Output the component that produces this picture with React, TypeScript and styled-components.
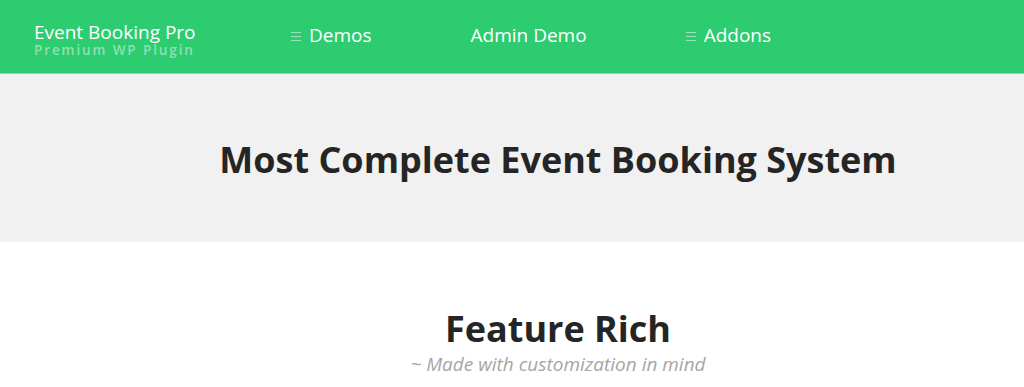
import React from "react";
import styled, { createGlobalStyle } from "styled-components";

const GlobalStyle = createGlobalStyle`
  html, body {
    margin: 0;
    padding: 0;
    background: #ffffff;
    font-family: "Open Sans", "Liberation Sans", sans-serif;
  }
`;

const navItems = [
  { label: "Demos", menu: true },
  { label: "Admin Demo", menu: false },
  { label: "Addons", menu: true },
];

export default function App() {
  return (
    <>
      <GlobalStyle />
      <Header>
        <Brand>
          <div className="name">Event Booking Pro</div>
          <div className="tagline">Premium WP Plugin</div>
        </Brand>
        <Nav>
          {navItems.map((item) => (
            <NavItem key={item.label}>
              {item.menu && <MenuIcon />}
              {item.label}
            </NavItem>
          ))}
        </Nav>
      </Header>
      <Hero>
        <HeroTitle>Most Complete Event Booking System</HeroTitle>
      </Hero>
      <Section>
        <SectionTitle>Feature Rich</SectionTitle>
        <SectionSub>~ Made with customization in mind</SectionSub>
      </Section>
    </>
  );
}

const Header = styled.header`
  height: 73px;
  background: #2ecc71;
  border-bottom: 1px solid #7fe0a8;
  display: flex;
  align-items: center;
  padding-left: 34px;
  box-sizing: content-box;
`;

const Brand = styled.div`
  width: 257px;
  display: flex;
  flex-direction: column;
  margin-top: 6px;

  > .name {
    color: #ffffff;
    font-size: 19px;
    line-height: 20px;
  }

  > .tagline {
    color: rgba(255, 255, 255, 0.45);
    font-size: 13.5px;
    font-weight: 600;
    letter-spacing: 1.9px;
    line-height: 16px;
  }
`;

const Nav = styled.nav`
  display: flex;
  gap: 99px;
  margin-top: -4px;
`;

const NavItem = styled.div`
  display: flex;
  align-items: center;
  color: #ffffff;
  font-size: 19px;
  line-height: 24px;
`;

const MenuIcon = styled.span`
  display: inline-block;
  width: 10px;
  height: 7px;
  margin-right: 8px;
  margin-top: 4px;
  border-top: 1px solid rgba(255, 255, 255, 0.5);
  border-bottom: 1px solid rgba(255, 255, 255, 0.5);
  position: relative;

  &::after {
    content: "";
    position: absolute;
    left: 0;
    right: 0;
    top: 3px;
    border-top: 1px solid rgba(255, 255, 255, 0.5);
  }
`;

const Hero = styled.section`
  height: 168px;
  background: #f1f1f1;
  display: flex;
  align-items: center;
  justify-content: center;
  padding-left: 92px;
`;

const HeroTitle = styled.h1`
  margin: 0;
  margin-top: 2px;
  color: #252525;
  font-size: 36px;
  font-weight: 700;
`;

const Section = styled.section`
  display: flex;
  flex-direction: column;
  align-items: center;
  padding-left: 92px;
  padding-top: 64px;
`;

const SectionTitle = styled.h2`
  margin: 0;
  color: #252525;
  font-size: 36px;
  font-weight: 700;
  line-height: 46px;
`;

const SectionSub = styled.div`
  color: #a6a6a6;
  font-size: 19px;
  font-style: italic;
  line-height: 24px;
`;
